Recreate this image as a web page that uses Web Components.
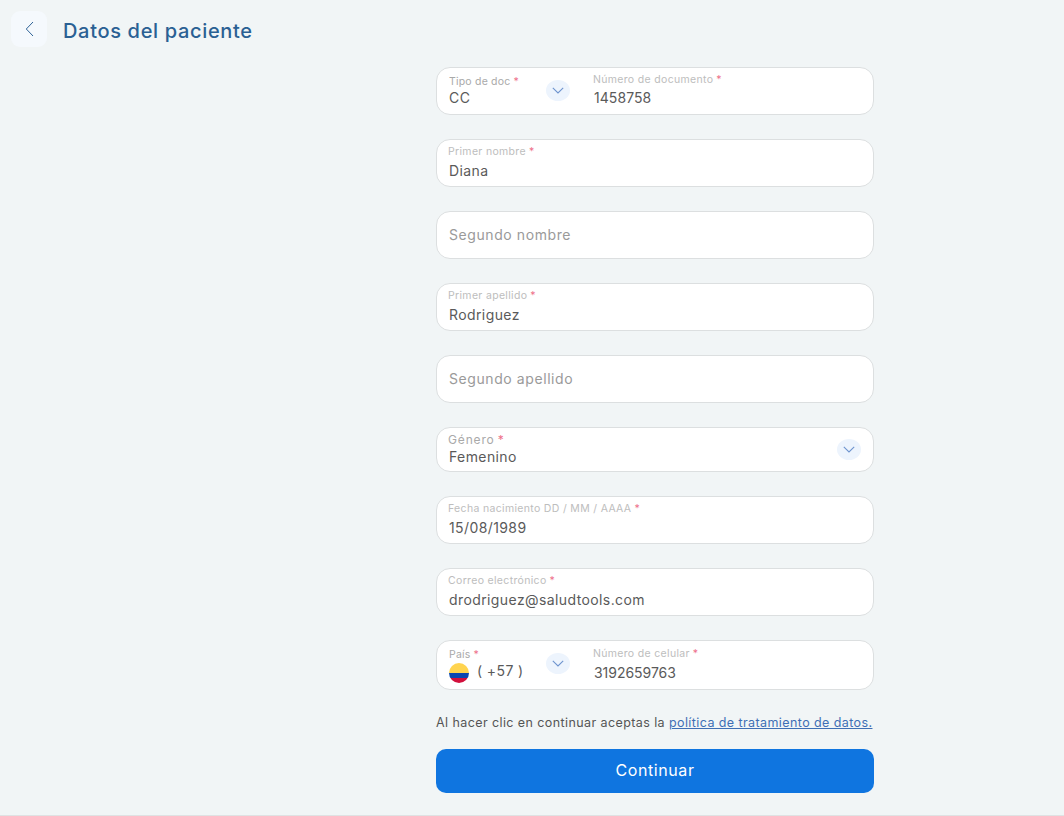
<!DOCTYPE html>
<html lang="es"><head><meta charset="utf-8"><title>Datos del paciente</title>
<style>
html,body{margin:0;padding:0;background:#f1f5f6}
body{font-family:"Inter","Noto Sans","Liberation Sans",sans-serif;overflow:hidden}
</style></head><body>
<patient-page>
<page-header slot="header">Datos del paciente</page-header>
<split-field left-label="Tipo de doc" left-value="CC" right-label="Número de documento" right-value="1458758"></split-field>
<text-field label="Primer nombre" value="Diana" required></text-field>
<text-field placeholder="Segundo nombre"></text-field>
<text-field label="Primer apellido" value="Rodriguez" required></text-field>
<text-field placeholder="Segundo apellido"></text-field>
<text-field label="Género" value="Femenino" required select></text-field>
<text-field label="Fecha nacimiento DD / MM / AAAA" value="15/08/1989" required></text-field>
<text-field label="Correo electrónico" value="drodriguez@saludtools.com" required></text-field>
<split-field phone left-label="País" left-value="( +57 )" right-label="Número de celular" right-value="3192659763"></split-field>
<consent-note>Al hacer clic en continuar aceptas la <a href="#" onclick="return false">política de tratamiento de datos.</a></consent-note>
<primary-button>Continuar</primary-button>
</patient-page>
<script>
const chevron=`<svg width="12" height="7" viewBox="0 0 12 7" fill="none"><path d="M.8.8 6 6 11.2.8" stroke="#6e94cf" stroke-width="1.1"/></svg>`;
const labelCss=`.lab{font-size:10.5px;line-height:14px;color:#bdbdbd;white-space:nowrap;letter-spacing:.33px}
.lab i{font-style:normal;color:#ee6f8a;margin-left:3px}
.val{font-size:14px;line-height:20px;color:#5a5a5a;white-space:nowrap;letter-spacing:.4px}
.chev{width:24px;height:21px;border-radius:12px/10.5px;background:#edf4fd;display:flex;align-items:center;justify-content:center;flex:none}`;
class PatientPage extends HTMLElement{constructor(){super();this.attachShadow({mode:'open'}).innerHTML=`<style>
:host{display:grid;grid-template-rows:auto 1fr;height:816px;box-sizing:border-box;border-bottom:1px solid #dfe2e3}
main{display:grid;grid-template-columns:436px 438px 1fr;padding-top:20px}
.col{grid-column:2;display:flex;flex-direction:column;gap:24px}
</style><slot name="header"></slot><main><div class="col"><slot></slot></div></main>`}}
class PageHeader extends HTMLElement{constructor(){super();this.attachShadow({mode:'open'}).innerHTML=`<style>
:host{display:flex;align-items:center;gap:16px;padding:11px 11px 0}
.b{width:36px;height:36px;border-radius:9px;background:#f5f9fd;display:flex;align-items:center;justify-content:center}
h1{margin:2px 0 -2px;font-size:20px;line-height:36px;height:36px;font-weight:500;color:#2a6093;letter-spacing:.67px}
</style><div class="b"><svg width="9" height="16" viewBox="0 0 9 16" fill="none"><path d="M8 1 1.3 8 8 15" stroke="#2f6397" stroke-width="1"/></svg></div><h1><slot></slot></h1>`}}
class TextField extends HTMLElement{connectedCallback(){
const a=n=>this.getAttribute(n),sel=this.hasAttribute('select'),ph=a('placeholder');
this.attachShadow({mode:'open'}).innerHTML=`<style>
:host{display:flex;align-items:center;box-sizing:border-box;height:${sel?45:48}px;background:#fff;border:1px solid #dcdfe0;border-radius:14px;padding:0 12px}
.t{flex:1;display:flex;flex-direction:column}
${labelCss}
.lab{margin:${sel?'0':'-2px'} 0 0 -1px;${sel?'color:#a9a9a9;font-size:12px;letter-spacing:.85px;':''}}
.val{margin:${sel?'0 0 -1px':'2px 0 -1px'}}
.ph{font-size:14px;line-height:20px;color:#9a9a9a;letter-spacing:.58px}
</style><div class="t">${ph?`<div class="ph">${ph}</div>`:`<div class="lab">${a('label')}${this.hasAttribute('required')?'<i>*</i>':''}</div><div class="val">${a('value')}</div>`}</div>${sel?`<div class="chev">${chevron}</div>`:''}`}}
class SplitField extends HTMLElement{connectedCallback(){
const a=n=>this.getAttribute(n),p=this.hasAttribute('phone');
const flag=`<svg width="20" height="20" viewBox="0 0 20 20"><defs><clipPath id="c"><circle cx="10" cy="10" r="10"/></clipPath></defs><g clip-path="url(#c)"><rect width="20" height="10" fill="#ffd44f"/><rect y="10" width="20" height="5" fill="#0a46b0"/><rect y="15" width="20" height="5" fill="#d20f3c"/></g></svg>`;
this.attachShadow({mode:'open'}).innerHTML=`<style>
:host{display:flex;align-items:stretch;box-sizing:border-box;height:${p?50:48}px;background:#fff;border:1px solid #dcdfe0;border-radius:14px;padding:0 12px}
.l{width:97px;display:flex;flex-direction:column;justify-content:center;flex:none}
.m{width:48px;flex:none;display:flex;align-items:center}
.r{flex:1;display:flex;flex-direction:column;justify-content:center}
${labelCss}
.l .lab{color:#a9a9a9;font-size:10.5px;letter-spacing:.2px;margin-top:${p?0:1}px}
.l .val{margin:-1px 0 1px}
.r .lab{margin-top:-1px;margin-left:-1px}
.r .val{letter-spacing:${p?'-.04px':'.06px'};margin:${p?'2px 0 -1px':'1px 0 0'}}
.phone{display:flex;align-items:center;gap:8px;height:20px;margin-top:1px}
.phone .val{margin:-4px 0 0;letter-spacing:.4px}
.m .chev{margin-top:${p?'-3px':'-1px'}}
</style><div class="l"><div class="lab">${a('left-label')}<i>*</i></div>${p?`<div class="phone">${flag}<span class="val">${a('left-value')}</span></div>`:`<div class="val">${a('left-value')}</div>`}</div>
<div class="m"><div class="chev">${chevron}</div></div>
<div class="r"><div class="lab">${a('right-label')}<i>*</i></div><div class="val">${a('right-value')}</div></div>`}}
class ConsentNote extends HTMLElement{constructor(){super();this.attachShadow({mode:'open'}).innerHTML=`<style>
:host{display:block;font-size:12.5px;line-height:18px;color:#555;white-space:nowrap;letter-spacing:.41px}
::slotted(a){color:#3f6fb5;text-decoration:underline}
</style><slot></slot>`}}
class PrimaryButton extends HTMLElement{constructor(){super();this.attachShadow({mode:'open'}).innerHTML=`<style>
:host{display:flex;align-items:center;justify-content:center;box-sizing:border-box;height:44px;padding-bottom:2px;margin-top:-7px;background:#0f75e0;border-radius:10px;color:#fff;font-size:16px;letter-spacing:.6px;cursor:pointer}
</style><slot></slot>`}}
customElements.define('patient-page',PatientPage);
customElements.define('page-header',PageHeader);
customElements.define('text-field',TextField);
customElements.define('split-field',SplitField);
customElements.define('consent-note',ConsentNote);
customElements.define('primary-button',PrimaryButton);
</script></body></html>
